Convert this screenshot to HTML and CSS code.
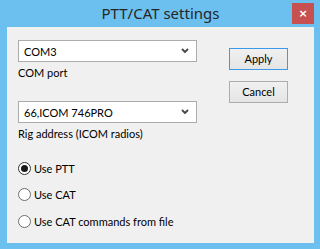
FILE: index.html
```html
<!DOCTYPE html>
<html lang="en">
<head>
<meta charset="utf-8">
<title>PTT/CAT settings</title>
<link rel="stylesheet" href="styles.css">
</head>
<body>
<div class="window">
  <div class="titlebar">
    <span class="title">PTT/CAT settings</span>
    <div class="close">&#215;</div>
  </div>
  <div class="client">
    <div class="col-left">
      <div class="combo">
        <span class="combo-text">COM3</span>
        <svg class="chevron" width="8" height="6" viewBox="0 0 8 6"><path d="M1 1 L4 4 L7 1" fill="none" stroke="#444" stroke-width="1.8"/></svg>
      </div>
      <div class="label">COM port</div>
      <div class="combo combo2">
        <span class="combo-text">66,ICOM 746PRO</span>
        <svg class="chevron" width="8" height="6" viewBox="0 0 8 6"><path d="M1 1 L4 4 L7 1" fill="none" stroke="#444" stroke-width="1.8"/></svg>
      </div>
      <div class="label">Rig address (ICOM radios)</div>
      <div class="radios">
        <div class="radio-row"><span class="radio checked"></span>Use PTT</div>
        <div class="radio-row"><span class="radio"></span>Use CAT</div>
        <div class="radio-row"><span class="radio"></span>Use CAT commands from file</div>
      </div>
    </div>
    <div class="col-right">
      <div class="button default">Apply</div>
      <div class="button">Cancel</div>
    </div>
  </div>
</div>
</body>
</html>
```
FILE: styles.css
```css
body { margin: 0; padding: 0; font-family: Lato, "Liberation Sans", sans-serif; font-size: 11px; color: #000; }

.window {
  width: 320px;
  height: 249px;
  box-sizing: border-box;
  background: #6cc0f0;
  padding: 0 6px 6px 7px;
  display: flex;
  flex-direction: column;
}

/* title bar */
.titlebar {
  height: 27px;
  position: relative;
  display: flex;
  justify-content: center;
  align-items: center;
}
.title { font-family: "Noto Sans", sans-serif; font-size: 15px; color: #262626; margin-top: -2px; }
.close {
  position: absolute;
  right: 0;
  top: 3px;
  width: 22px;
  height: 21px;
  background: #c75050;
  color: #fff;
  font-family: "DejaVu Sans", sans-serif;
  font-size: 11px;
  font-weight: bold;
  line-height: 21px;
  text-align: center;
}

/* client area */
.client {
  flex: 1;
  background: #f0f0f0;
  display: flex;
}
.col-left { width: 179px; padding: 13px 0 0 11px; }
.col-right { padding: 21px 0 0 32px; }

.combo {
  height: 20px;
  border: 1px solid #acacac;
  background: #fff;
  display: flex;
  align-items: center;
  justify-content: space-between;
  padding: 0 7px 0 5px;
}
.combo2 { margin-top: 21px; }
.chevron { display: block; }

.label { margin-top: 4px; line-height: 14px; }

.radios { margin-top: 14px; }
.radio-row { height: 26.5px; display: flex; align-items: center; }
.radio {
  width: 11px;
  height: 11px;
  border: 1px solid #6f6f6f;
  border-radius: 50%;
  background: #fff;
  margin-right: 3px;
  display: flex;
  align-items: center;
  justify-content: center;
}
.radio.checked { border-color: #333; }
.radio.checked:after { content: ""; width: 7px; height: 7px; border-radius: 50%; background: #1a1a1a; }

.button {
  width: 57px;
  height: 20px;
  border: 1px solid #acacac;
  background: linear-gradient(#f0f0f0, #e5e5e5);
  text-align: center;
  line-height: 20px;
  margin-bottom: 11px;
}
.button.default { border-color: #3c9ae8; }
```
